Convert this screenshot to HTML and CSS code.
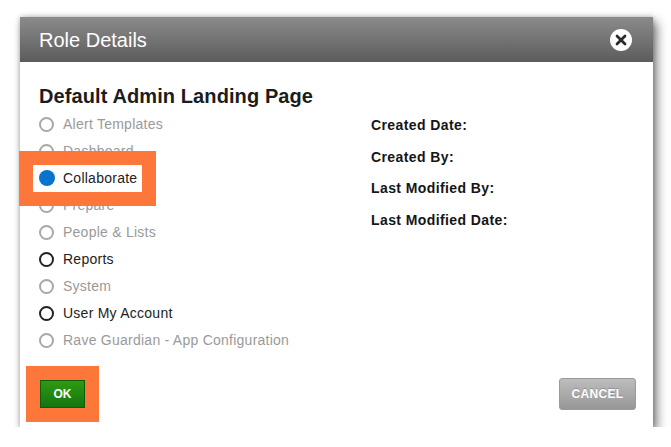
FILE: index.html
```html
<!DOCTYPE html>
<html lang="en">
<head>
<meta charset="utf-8">
<title>Role Details</title>
<link rel="stylesheet" href="styles.css">
</head>
<body>
<div class="dialog">
  <div class="dialog-header">
    <h1 class="dialog-title">Role Details</h1>
    <button class="close-btn" aria-label="Close">
      <svg width="12" height="12" viewBox="0 0 12 12"><path d="M2 2 L10 10 M10 2 L2 10" stroke="#2b2b2b" stroke-width="2.8" stroke-linecap="round"/></svg>
    </button>
  </div>
  <div class="dialog-body">
    <h2 class="section-title">Default Admin Landing Page</h2>
    <div class="columns">
      <ul class="options">
        <li class="opt disabled"><span class="radio"></span>Alert Templates</li>
        <li class="opt disabled"><span class="radio"></span>Dashboard</li>
        <li class="opt selected callout"><span class="radio"></span>Collaborate</li>
        <li class="opt disabled"><span class="radio"></span>Prepare</li>
        <li class="opt disabled"><span class="radio"></span>People &amp; Lists</li>
        <li class="opt"><span class="radio"></span>Reports</li>
        <li class="opt disabled"><span class="radio"></span>System</li>
        <li class="opt"><span class="radio"></span>User My Account</li>
        <li class="opt disabled"><span class="radio"></span>Rave Guardian - App Configuration</li>
      </ul>
      <dl class="meta">
        <dt>Created Date:</dt>
        <dt>Created By:</dt>
        <dt>Last Modified By:</dt>
        <dt>Last Modified Date:</dt>
      </dl>
    </div>
  </div>
  <div class="dialog-footer">
    <button class="btn btn-ok callout-btn">OK</button>
    <button class="btn btn-cancel">CANCEL</button>
  </div>
</div>
</body>
</html>
```
FILE: styles.css
```css
html, body {
  margin: 0;
  padding: 0;
  background: #ffffff;
}

body {
  padding: 17px 0 0 20px;
  font-family: "Liberation Sans", Arial, sans-serif;
}

.dialog {
  width: 633px;
  height: 410px;
  background: #ffffff;
  display: flex;
  flex-direction: column;
  box-shadow: 4px 5px 10px rgba(0, 0, 0, 0.5), 0 0 5px rgba(0, 0, 0, 0.25);
}

.dialog-header {
  height: 45px;
  flex: none;
  display: flex;
  align-items: center;
  justify-content: space-between;
  padding: 0 21px 0 19px;
  background: linear-gradient(#8b8b8b, #5c5c5c);
  box-sizing: border-box;
}

.dialog-title {
  margin: 0;
  font-size: 20px;
  font-weight: normal;
  color: #ffffff;
  line-height: 24px;
}

.close-btn {
  width: 22px;
  height: 22px;
  border-radius: 50%;
  border: none;
  padding: 0;
  background: #ffffff;
  display: flex;
  align-items: center;
  justify-content: center;
}

.dialog-body {
  flex: 1;
  padding: 22px 19px 0;
}

.section-title {
  margin: 0;
  font-size: 20px;
  font-weight: bold;
  line-height: 24px;
  letter-spacing: 0.1px;
  color: #1c1c1c;
}

.columns {
  display: grid;
  grid-template-columns: 332px 1fr;
  margin-top: 2.5px;
}

.options {
  list-style: none;
  margin: 0;
  padding: 0;
}

.opt {
  display: flex;
  align-items: center;
  height: 27px;
  font-size: 14px;
  letter-spacing: 0.25px;
  color: #222222;
}

.opt.disabled {
  color: #9a9a9a;
}

.radio {
  width: 15px;
  height: 15px;
  box-sizing: border-box;
  border-radius: 50%;
  border: 2px solid #222222;
  margin: 0 9px 0 0;
  flex: none;
}

.opt.disabled .radio {
  border-color: #a8a8a8;
}

.opt.selected .radio {
  width: 16px;
  height: 16px;
  border: none;
  background: #0a74cc;
  margin: 0 8px 0 0;
}

/* highlighted choice: white tag with a thick orange frame around it */
.callout {
  position: relative;
  z-index: 1;
  width: fit-content;
  margin-left: -6px;
  padding: 0 5px 0 6px;
  background: #ffffff;
  box-shadow: 0 0 3px rgba(0, 0, 0, 0.35);
  outline: 14px solid #fd763a;
}

.meta {
  margin: 5.5px 0 0;
}

.meta dt {
  font-size: 14px;
  font-weight: bold;
  letter-spacing: 0.4px;
  line-height: 18px;
  color: #151515;
  margin-bottom: 13.5px;
}

.dialog-footer {
  flex: none;
  display: flex;
  align-items: center;
  justify-content: space-between;
  padding: 0 17px 17px 20px;
}

.btn {
  font-family: "Liberation Sans", Arial, sans-serif;
  font-weight: bold;
  font-size: 12px;
  color: #ffffff;
  padding: 0;
  cursor: pointer;
}

.btn-ok {
  width: 45px;
  height: 28px;
  border: 1px solid #0b5d09;
  background: linear-gradient(#2f9a12, #137510);
}

.callout-btn {
  outline: 14px solid #fd763a;
}

.btn-cancel {
  width: 77px;
  height: 32px;
  border: 1px solid #9a9a9a;
  border-radius: 3px;
  background: linear-gradient(#bdbdbd, #979797);
  text-shadow: 0 -1px 0 rgba(0, 0, 0, 0.2);
  letter-spacing: 0.3px;
}
```
